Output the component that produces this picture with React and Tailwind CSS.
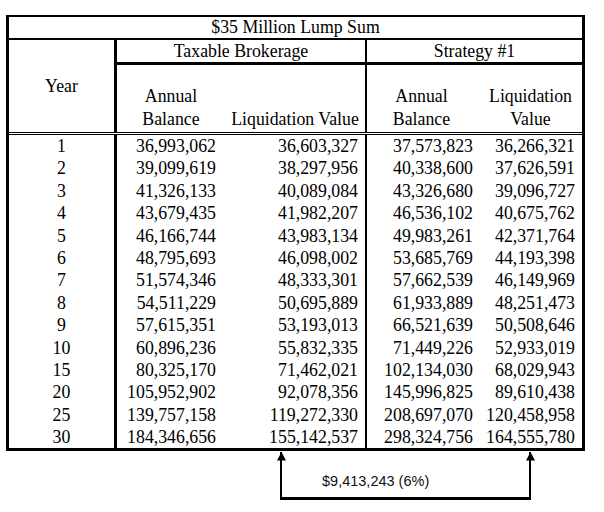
import React from "react";

const years = ["1", "2", "3", "4", "5", "6", "7", "8", "9", "10", "15", "20", "25", "30"];
const tbAnnual = ["36,993,062", "39,099,619", "41,326,133", "43,679,435", "46,166,744", "48,795,693", "51,574,346", "54,511,229", "57,615,351", "60,896,236", "80,325,170", "105,952,902", "139,757,158", "184,346,656"];
const tbLiq = ["36,603,327", "38,297,956", "40,089,084", "41,982,207", "43,983,134", "46,098,002", "48,333,301", "50,695,889", "53,193,013", "55,832,335", "71,462,021", "92,078,356", "119,272,330", "155,142,537"];
const sAnnual = ["37,573,823", "40,338,600", "43,326,680", "46,536,102", "49,983,261", "53,685,769", "57,662,539", "61,933,889", "66,521,639", "71,449,226", "102,134,030", "145,996,825", "208,697,070", "298,324,756"];
const sLiq = ["36,266,321", "37,626,591", "39,096,727", "40,675,762", "42,371,764", "44,193,398", "46,149,969", "48,251,473", "50,508,646", "52,933,019", "68,029,943", "89,610,438", "120,458,958", "164,555,780"];

function Arrow({ side }) {
  return (
    <svg
      width="9"
      height="9"
      viewBox="0 0 9 9"
      className={
        "absolute top-0 " + (side === "left" ? "-left-[5.5px]" : "-right-[5.5px]")
      }
    >
      <polygon points="4.5,0 9,8.5 0,8.5" fill="#000" />
    </svg>
  );
}

export default function App() {
  return (
    <div
      className="w-[604px] h-[512px] bg-white pt-[15px] pl-[6px] text-black"
      style={{ fontFamily: '"Liberation Serif", "Times New Roman", serif' }}
    >
      <div className="w-[579px] border-x-[3px] border-t-2 border-b-[3px] border-black text-[17.8px]">
        {/* Title */}
        <div className="h-[23px] leading-[21px] text-center border-b-2 border-black">
          $35 Million Lump Sum
        </div>

        {/* Header */}
        <div className="flex h-[92px]">
          <div className="w-[108px] border-r-[3px] border-black flex items-center justify-center leading-[22px]">
            Year
          </div>
          <div className="w-[250px] border-r-2 border-black flex flex-col">
            <div className="h-[25px] leading-[22px] text-center border-b-[3px] border-black">
              Taxable Brokerage
            </div>
            <div className="flex flex-1">
              <div className="w-[108px] flex flex-col justify-end items-center pb-[2px] leading-[22.5px]">
                <div>Annual</div>
                <div>Balance</div>
              </div>
              <div className="flex-1 flex flex-col justify-end items-center pb-[2px] leading-[22.5px] whitespace-nowrap">
                <div>Liquidation Value</div>
              </div>
            </div>
          </div>
          <div className="flex-1 flex flex-col">
            <div className="h-[25px] leading-[22px] text-center border-b-[3px] border-black">
              Strategy #1
            </div>
            <div className="flex flex-1">
              <div className="w-[109px] flex flex-col justify-end items-center pb-[2px] leading-[22.5px]">
                <div>Annual</div>
                <div>Balance</div>
              </div>
              <div className="flex-1 flex flex-col justify-end items-center pb-[2px] pl-[3px] leading-[22.5px]">
                <div>Liquidation</div>
                <div>Value</div>
              </div>
            </div>
          </div>
        </div>

        {/* Double rule */}
        <div className="h-[3px] border-y border-black" />

        {/* Data */}
        <div className="flex leading-[22.4px]">
          <div className="w-[108px] border-r-[3px] border-black">
            {years.map((y) => (
              <div key={y} className="h-[22.4px] text-center">
                {y}
              </div>
            ))}
          </div>
          <div className="w-[250px] border-r-2 border-black">
            {years.map((y, i) => (
              <div key={y} className="h-[22.4px] flex">
                <div className="w-[108px] text-right pr-[9px]">{tbAnnual[i]}</div>
                <div className="flex-1 text-right pr-[7px]">{tbLiq[i]}</div>
              </div>
            ))}
          </div>
          <div className="flex-1">
            {years.map((y, i) => (
              <div key={y} className="h-[22.4px] flex">
                <div className="w-[109px] text-right pr-[3px]">{sAnnual[i]}</div>
                <div className="flex-1 text-right pr-[7px]">{sLiq[i]}</div>
              </div>
            ))}
          </div>
        </div>
      </div>

      {/* Difference bracket */}
      <div className="relative ml-[274px] mt-[1px] w-[251px] h-[48px] border-x-2 border-b-[3px] border-black">
        <Arrow side="left" />
        <Arrow side="right" />
        <div
          className="pl-[40px] pt-[21px] text-[14.5px] leading-[16px] text-[#111]"
          style={{ fontFamily: '"Liberation Sans", Arial, sans-serif' }}
        >
          $9,413,243 (6%)
        </div>
      </div>
    </div>
  );
}
